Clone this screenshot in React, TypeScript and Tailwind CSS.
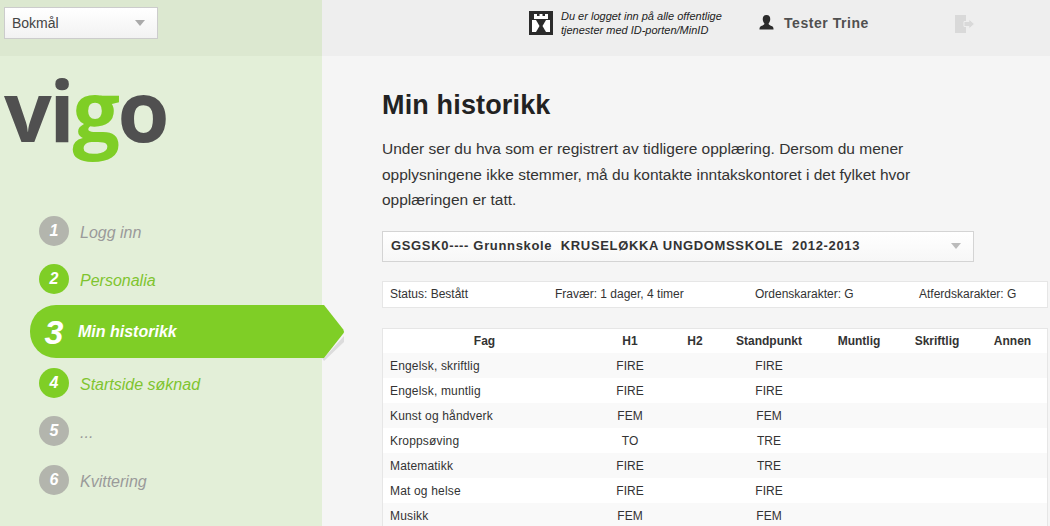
const font = "font-['Liberation_Sans',Arial,sans-serif]";

const steps = [
  { n: '1', label: 'Logg inn', done: false, mt: 'mt-0' },
  { n: '2', label: 'Personalia', done: true, mt: 'mt-[18px]' },
];
const stepsAfter = [
  { n: '4', label: 'Startside søknad', done: true, mt: 'mt-[10px]' },
  { n: '5', label: '...', done: false, mt: 'mt-[18px]' },
  { n: '6', label: 'Kvittering', done: false, mt: 'mt-[19px]' },
];

function Step({ n, label, done, mt }: { n: string; label: string; done: boolean; mt: string }) {
  return (
    <div className={`flex items-center h-[30px] pl-[39px] ${mt}`}>
      <div className={`w-[30px] h-[30px] rounded-full flex items-center justify-center text-white italic font-bold text-[16px] ${done ? 'bg-[#7fce26]' : 'bg-[#b3b5ad]'}`}>{n}</div>
      <div className={`ml-[11px] mt-[3px] italic text-[16px] ${done ? 'text-[#7fc42f]' : 'text-[#9a9a9a]'}`}>{label}</div>
    </div>
  );
}

function Caret({ className }: { className: string }) {
  return <div className={`w-0 h-0 border-l-[5px] border-r-[5px] border-t-[6px] border-l-transparent border-r-transparent ${className}`} />;
}

const rows = [
  ['Engelsk, skriftlig', 'FIRE', 'FIRE'],
  ['Engelsk, muntlig', 'FIRE', 'FIRE'],
  ['Kunst og håndverk', 'FEM', 'FEM'],
  ['Kroppsøving', 'TO', 'TRE'],
  ['Matematikk', 'FIRE', 'TRE'],
  ['Mat og helse', 'FIRE', 'FIRE'],
  ['Musikk', 'FEM', 'FEM'],
];

const cols = 'grid grid-cols-[203px_88px_42px_106px_74px_82px_69px]';

export default function App() {
  return (
    <div className={`${font} w-[1050px] h-[526px] overflow-hidden flex bg-[#f5f5f5] text-[#333]`}>
      <aside className="w-[322px] shrink-0 h-full bg-[#e3efd8] relative z-10">
        <div className="h-[56px] bg-[#dce8d0] pt-[7px] pl-[4px]">
          <div className="w-[154px] h-[32px] border border-[#cccccc] bg-gradient-to-b from-white to-[#f2f2f2] flex items-center justify-between pl-[7px] pr-[12px] text-[14px] text-[#444]">
            <span>Bokmål</span>
            <Caret className="border-t-[#aaaaaa]" />
          </div>
        </div>
        <div className="h-[160px] pl-[4px] pt-[4px]">
          <div className="h-[100px] font-['Open_Sans',sans-serif] text-[84px] leading-[100px] font-bold tracking-[-2.5px] text-[#505050]">
            vi<span className="text-[#7fce26]">g</span>o
          </div>
        </div>
        <div>
          {steps.map((s) => <Step key={s.n} {...s} />)}
          <div className="mt-[11px] ml-[30px] h-[53px] w-[316px] flex">
            <div className="w-[292px] h-full rounded-l-[26px] bg-[#7fce26] flex items-center text-white italic font-bold">
              <span className="w-[48px] text-center text-[34px] leading-none">3</span>
              <span className="text-[16px]">Min historikk</span>
            </div>
            <svg width="24" height="56" viewBox="0 0 24 56" className="shrink-0">
              <path d="M0 53 L2 53 L22 31 L22 37 L2 56 Z" fill="#000" opacity="0.1" />
              <path d="M0 0 H2 L21.300 24.500 Q22.600 26.500 21.300 28.500 L2 53 H0 Z" fill="#7fce26" />
            </svg>
          </div>
          {stepsAfter.map((s) => <Step key={s.n} {...s} />)}
        </div>
      </aside>

      <div className="flex-1 min-w-0">
        <header className="h-[56px] bg-[#eeeeee] flex items-start pt-[11px]">
          <svg width="24" height="24" viewBox="0 0 24 24" className="ml-[207px] shrink-0">
            <rect width="24" height="24" fill="#2b2b2b" />
            <path d="M5 3 H8 V5 H10.500 V3 H13.500 V5 H16 V3 H19 V8 H5 Z" fill="#fff" />
            <path d="M3 9 H7 L10.500 15 L7 21 H3 Z" fill="#fff" />
            <path d="M21 9 H17 L13.500 15 L17 21 H21 Z" fill="#fff" />
          </svg>
          <div className="ml-[8px] w-[190px] italic text-[11px] leading-[14px] -mt-[2px] text-[#222]">
            Du er logget inn på alle offentlige tjenester med ID-porten/MinID
          </div>
          <svg width="15" height="15" viewBox="0 0 16 16" className="ml-[8px] mt-[4px] shrink-0">
            <path d="M8 0 C5 0 4 2 4 4.500 C4 6.500 5 8 5.800 9 C5.800 10.500 4 11 2 12 C0.800 12.700 0.500 14 0.500 15.500 H15.500 C15.500 14 15.200 12.700 14 12 C12 11 10.200 10.500 10.200 9 C11 8 12 6.500 12 4.500 C12 2 11 0 8 0 Z" fill="#2b2b2b" />
          </svg>
          <div className="ml-[10px] mt-[2px] font-bold text-[14px] tracking-[0.55px] text-[#505050]">Tester Trine</div>
          <svg width="20" height="20" viewBox="0 0 20 20" className="ml-[86px] mt-[3px] shrink-0">
            <rect x="0" y="1" width="11" height="18" fill="#d9d9d9" />
            <path d="M9 7.500 H14 V5 L19.500 10 L14 15 V12.500 H9 Z" fill="#d9d9d9" stroke="#eeeeee" strokeWidth="1" />
          </svg>
        </header>

        <main className="pl-[60px]">
          <h1 className="mt-[33px] text-[27px] leading-[32px] font-bold tracking-[0.15px] text-[#222]">Min historikk</h1>
          <p className="mt-[15px] w-[590px] text-[15.5px] leading-[25.5px] text-[#333]">
            Under ser du hva som er registrert av tidligere opplæring. Dersom du mener opplysningene ikke stemmer, må du kontakte inntakskontoret i det fylket hvor opplæringen er tatt.
          </p>

          <div className="mt-[18px] w-[592px] h-[31px] bg-gradient-to-b from-white to-[#f7f7f7] border border-[#d4d4d4] flex items-center justify-between pl-[8px] pr-[12px] text-[13px] font-bold tracking-[0.66px] text-[#333] whitespace-pre">
            <span>GSGSK0---- Grunnskole  KRUSELØKKA UNGDOMSSKOLE  2012-2013</span>
            <Caret className="border-t-[#bbbbbb]" />
          </div>

          <div className="mt-[19px] w-[666px] h-[27px] bg-white border border-[#e6e6e6] flex items-center pl-[7px] text-[12px] text-[#333]">
            <span className="w-[165px]">Status: Bestått</span>
            <span className="w-[200px]">Fravær: 1 dager, 4 timer</span>
            <span className="w-[164px]">Ordenskarakter: G</span>
            <span>Atferdskarakter: G</span>
          </div>

          <div className="mt-[20px] w-[666px] bg-white border-x border-t border-[#e6e6e6] text-[12px] text-[#333]">
            <div className={`${cols} h-[24px] items-center text-center font-bold text-[#333]`}>
              <span>Fag</span><span>H1</span><span>H2</span><span>Standpunkt</span><span>Muntlig</span><span>Skriftlig</span><span>Annen</span>
            </div>
            {rows.map((r, i) => (
              <div key={r[0]} className={`${cols} h-[25px] items-center pt-[2px] ${i % 2 === 0 ? 'bg-[#f9f9f9]' : 'bg-white'}`}>
                <span className="pl-[7px] tracking-[0.17px]">{r[0]}</span>
                <span className="text-center">{r[1]}</span>
                <span />
                <span className="text-center">{r[2]}</span>
                <span /><span /><span />
              </div>
            ))}
          </div>
        </main>
      </div>
    </div>
  );
}
